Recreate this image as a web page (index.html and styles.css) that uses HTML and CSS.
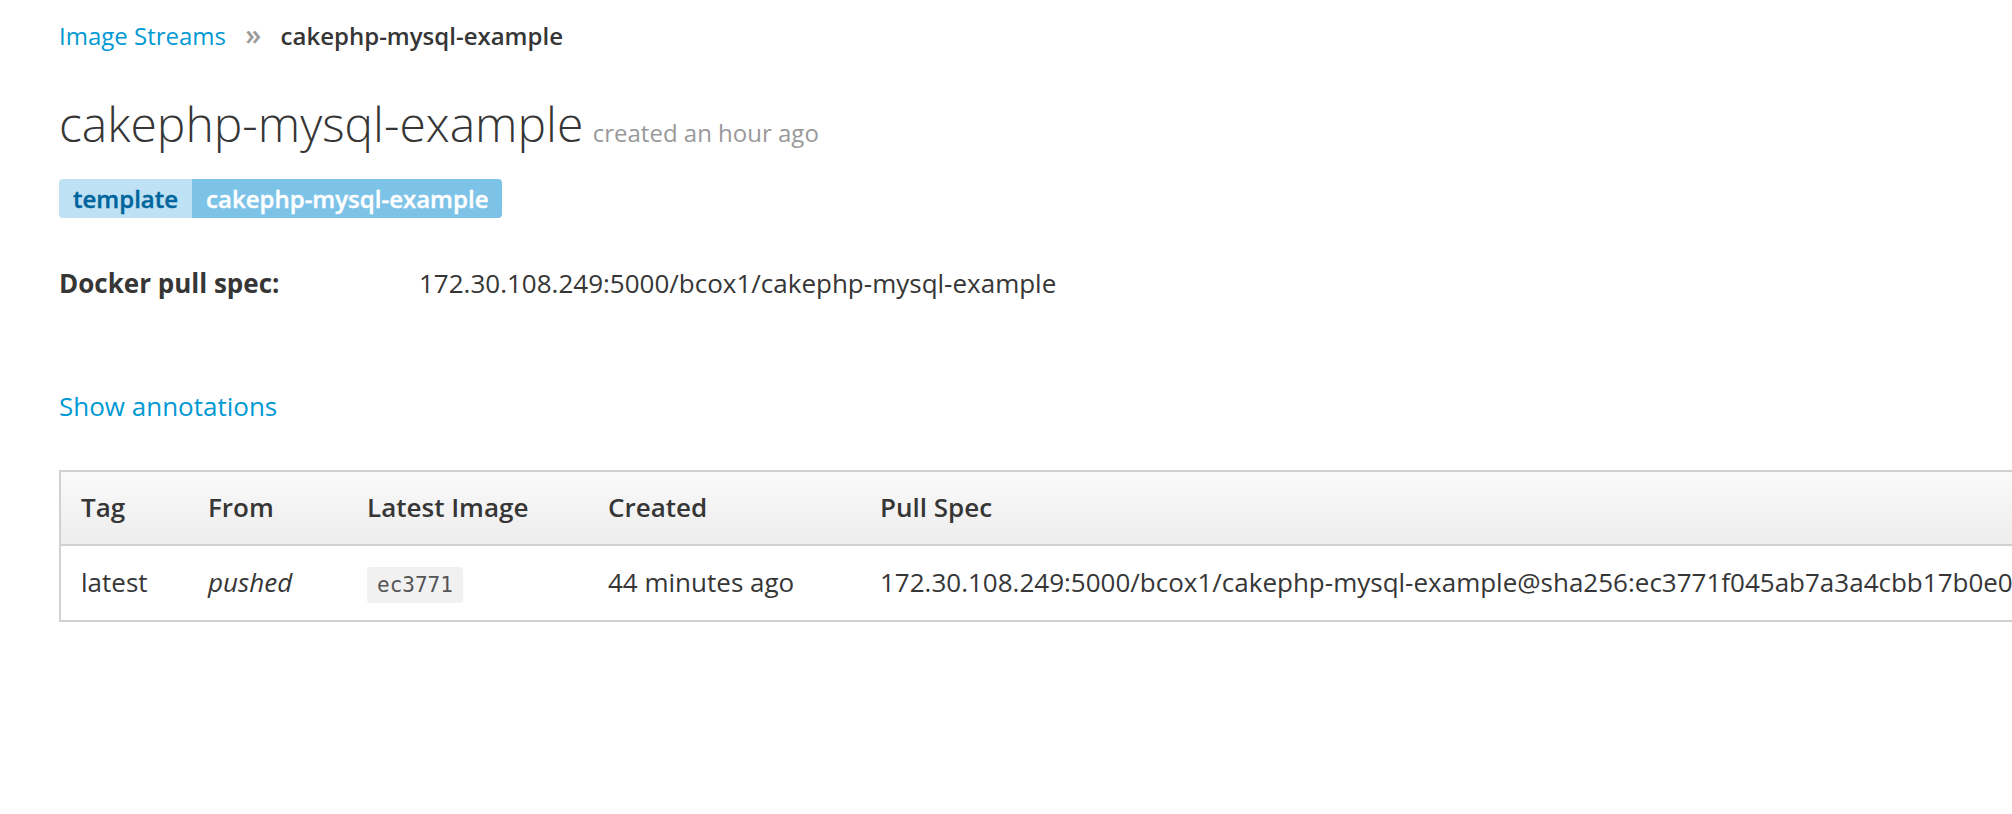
FILE: index.html
```html
<!DOCTYPE html>
<html>
<head>
<meta charset="utf-8">
<title>cakephp-mysql-example</title>
<link rel="stylesheet" href="styles.css">
</head>
<body>
<div class="page">
  <nav class="breadcrumb">
    <a class="crumb-link" href="#">Image Streams</a>
    <span class="crumb-sep">»</span>
    <span class="crumb-active">cakephp-mysql-example</span>
  </nav>
  <h1 class="title">cakephp-mysql-example <small class="title-meta">created an hour ago</small></h1>
  <div class="labels">
    <span class="label-key">template</span><span class="label-value">cakephp-mysql-example</span>
  </div>
  <dl class="spec">
    <dt class="spec-term">Docker pull spec:</dt>
    <dd class="spec-value">172.30.108.249:5000/bcox1/cakephp-mysql-example</dd>
  </dl>
  <a class="annotations" href="#">Show annotations</a>
  <div class="table-wrap">
    <table class="tags">
      <thead>
        <tr>
          <th class="c-tag">Tag</th>
          <th class="c-from">From</th>
          <th class="c-image">Latest Image</th>
          <th class="c-created">Created</th>
          <th class="c-pull">Pull Spec</th>
        </tr>
      </thead>
      <tbody>
        <tr>
          <td>latest</td>
          <td><em>pushed</em></td>
          <td><code class="hash">ec3771</code></td>
          <td>44 minutes ago</td>
          <td>172.30.108.249:5000/bcox1/cakephp-mysql-example@sha256:ec3771f045ab7a3a4cbb17b0e0c8f1d92a6e0b4f5c7d3e8a91b2c4d6f8e0a1b3</td>
        </tr>
      </tbody>
    </table>
  </div>
</div>
</body>
</html>
```
FILE: styles.css
```css
html, body {
  margin: 0;
  padding: 0;
  background: #ffffff;
  overflow: hidden;
}
body {
  font-family: "Open Sans", "Liberation Sans", sans-serif;
  color: #363636;
  font-size: 26px;
}
.page {
  padding: 14px 0 0 59px;
}
.breadcrumb {
  font-size: 24px;
  line-height: 40px;
  height: 40px;
  white-space: nowrap;
}
.crumb-link {
  color: #0099d3;
  text-decoration: none;
}
.crumb-sep {
  color: #9c9c9c;
  font-size: 29px;
  font-weight: 600;
  margin: 0 13px 0 13px;
}
.crumb-active {
  font-weight: 600;
  color: #363636;
}
.title {
  margin: 43px 0 0 0;
  font-size: 48px;
  font-weight: 300;
  line-height: 53px;
  white-space: nowrap;
}
.title-meta {
  font-size: 24px;
  color: #999999;
  font-weight: 400;
  margin-left: -3px;
}
.labels {
  margin-top: 20px;
  display: flex;
  height: 39px;
}
.label-key,
.label-value {
  font-size: 24px;
  font-weight: 600;
  line-height: 39px;
  padding: 0 14px;
  -webkit-text-stroke: 0.4px currentColor;
}
.label-key {
  background: #bee1f4;
  color: #00659c;
  border-radius: 4px 0 0 4px;
}
.label-value {
  background: #7dc3e8;
  color: #ffffff;
  border-radius: 0 4px 4px 0;
}
.spec {
  margin: 45px 0 0 0;
  display: flex;
  line-height: 40px;
}
.spec-term {
  width: 360px;
  font-weight: 700;
  flex: none;
}
.spec-value {
  margin: 0;
}
.annotations {
  display: block;
  margin-top: 83px;
  line-height: 40px;
  color: #0099d3;
  text-decoration: none;
  width: max-content;
}
.table-wrap {
  margin-top: 44px;
  width: 2600px;
}
.tags {
  border-collapse: collapse;
  table-layout: fixed;
  width: 2600px;
  border: 2px solid #d1d1d1;
  line-height: 40px;
  text-align: left;
}
.tags th {
  font-weight: 600;
  padding: 15px 20px 17px 20px;
  background: linear-gradient(to bottom, #fafafa 0%, #ededed 100%);
  border-bottom: 2px solid #d1d1d1;
}
.tags td {
  padding: 15px 20px 17px 20px;
  height: 40px;
  white-space: nowrap;
  overflow: hidden;
}
.c-tag { width: 87px; }
.c-from { width: 119px; }
.c-image { width: 201px; }
.c-created { width: 232px; }
.hash {
  display: inline-block;
  vertical-align: top;
  margin-top: 6px;
  font-family: "DejaVu Sans Mono", "Liberation Mono", monospace;
  font-size: 21px;
  line-height: 36px;
  color: #555555;
  background: #f1f1f1;
  border-radius: 3px;
  padding: 0 10px;
}
```
